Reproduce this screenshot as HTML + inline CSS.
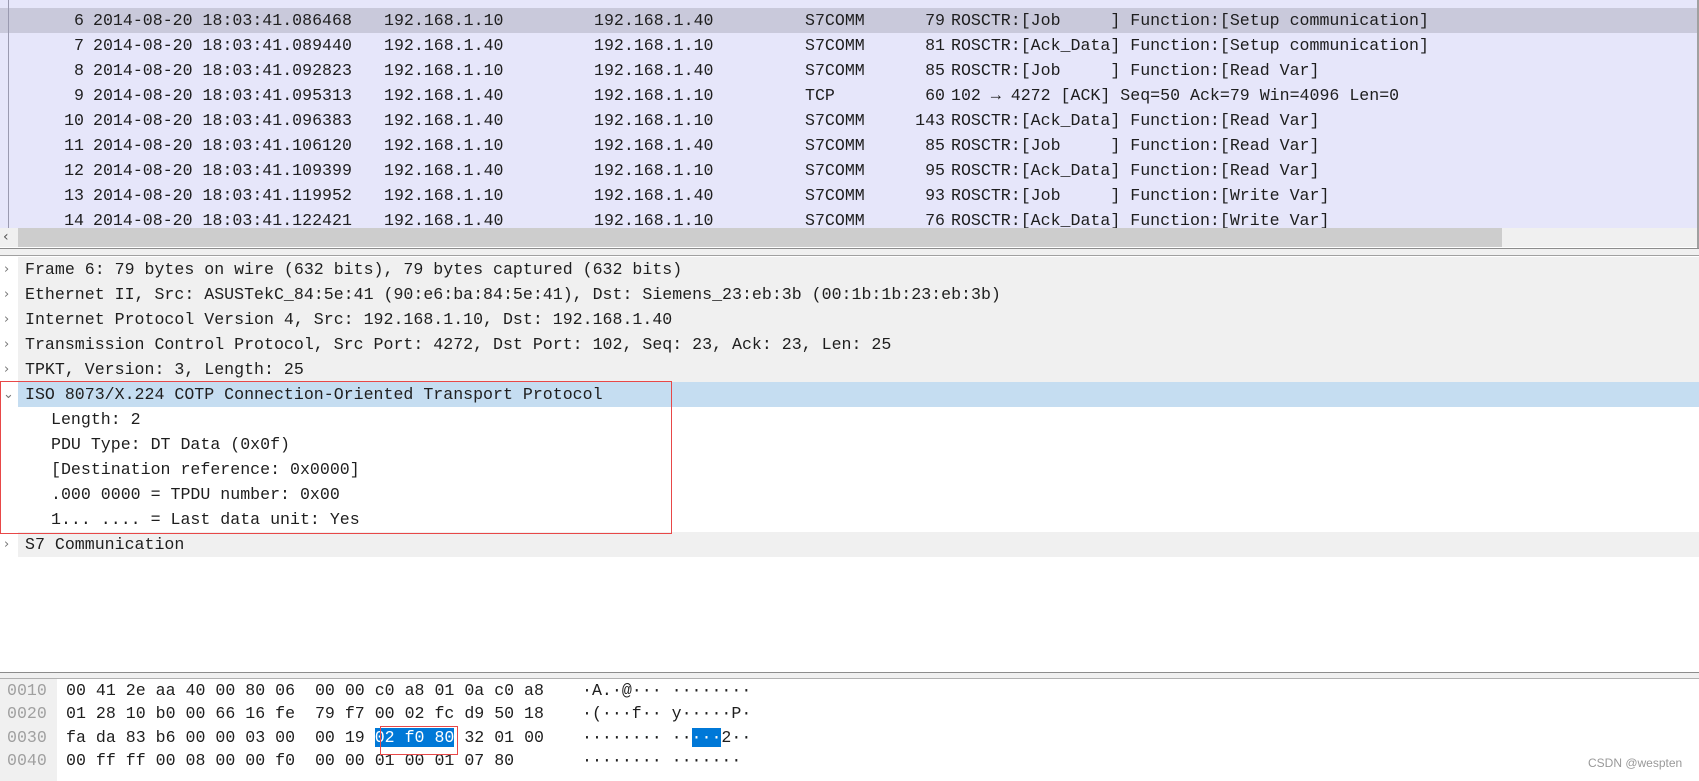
<!DOCTYPE html>
<html><head><meta charset="utf-8"><style>
*{margin:0;padding:0;box-sizing:border-box}
body{width:1699px;height:781px;overflow:hidden;background:#fff;position:relative;font-family:"Liberation Mono",monospace;font-size:16.6px;color:#1e1e1e}
.a{position:absolute;white-space:pre;line-height:25px}
#list{position:absolute;left:0;top:0;width:1697px;height:228px;background:#e6e6fa;overflow:hidden}
.row{position:absolute;left:0;width:1697px;height:25px}
.sel{background:#c9c9db}
.vl{position:absolute;left:8px;top:0;width:1px;height:228px;background:#9a9ab0}
.dr{position:absolute;left:18px;width:1681px;height:25px;background:#f0f0f0}
.arr{position:absolute;left:4px;font-family:"DejaVu Sans",sans-serif;font-size:13px;color:#777;line-height:25px}
.off{color:#a0a0a0}
.hs{background:#0078d7;color:#fff}
</style></head><body>
<div id="list">
<div class="row" style="top:-17px"></div>
<div class="row sel" style="top:8px"></div>
<div class="vl"></div>
<div class="a" style="left:0;top:-17px"><span style="display:inline-block;width:84px;text-align:right">5</span> 2014-08-20 18:03:41.083468</div>
<div class="a" style="left:384px;top:-17px">192.168.1.40</div><div class="a" style="left:594px;top:-17px">192.168.1.10</div><div class="a" style="left:805px;top:-17px">COTP</div><div class="a" style="left:905px;top:-17px">   73 CC TPDU src-ref: 0x0044 dst-ref: 0x0001</div>
</div>
<div id="rows"></div>
<!-- scrollbar -->
<div style="position:absolute;left:0;top:228px;width:1697px;height:19px;background:#f0f0f0"></div>
<div style="position:absolute;left:18px;top:228px;width:1484px;height:19px;background:#cdcdcd"></div>
<div class="a" style="left:3px;top:225px;font-family:'DejaVu Sans',sans-serif;font-size:14px;color:#555">‹</div>
<div style="position:absolute;left:1697px;top:0;width:2px;height:248px;background:#a0a0a0"></div>
<div style="position:absolute;left:0;top:248px;width:1699px;height:1px;background:#8c8c8c"></div>
<div style="position:absolute;left:0;top:249px;width:1699px;height:7px;background:#f0f0f0"></div>
<div style="position:absolute;left:0;top:255px;width:1699px;height:1px;background:#a0a0a0"></div>
<!-- details -->
<div class="dr" style="top:257px"></div><div class="dr" style="top:282px"></div><div class="dr" style="top:307px"></div><div class="dr" style="top:332px"></div><div class="dr" style="top:357px"></div>
<div class="dr" style="top:382px;background:#c5ddf1"></div>
<div class="dr" style="top:532px"></div>
<div class="arr" style="top:257px">›</div><div class="arr" style="top:282px">›</div><div class="arr" style="top:307px">›</div><div class="arr" style="top:332px">›</div><div class="arr" style="top:357px">›</div><div class="arr" style="top:382px;left:3px">⌄</div><div class="arr" style="top:532px">›</div>
<div class="a" style="left:25px;top:257px">Frame 6: 79 bytes on wire (632 bits), 79 bytes captured (632 bits)</div>
<div class="a" style="left:25px;top:282px">Ethernet II, Src: ASUSTekC_84:5e:41 (90:e6:ba:84:5e:41), Dst: Siemens_23:eb:3b (00:1b:1b:23:eb:3b)</div>
<div class="a" style="left:25px;top:307px">Internet Protocol Version 4, Src: 192.168.1.10, Dst: 192.168.1.40</div>
<div class="a" style="left:25px;top:332px">Transmission Control Protocol, Src Port: 4272, Dst Port: 102, Seq: 23, Ack: 23, Len: 25</div>
<div class="a" style="left:25px;top:357px">TPKT, Version: 3, Length: 25</div>
<div class="a" style="left:25px;top:382px">ISO 8073/X.224 COTP Connection-Oriented Transport Protocol</div>
<div class="a" style="left:51px;top:407px">Length: 2</div>
<div class="a" style="left:51px;top:432px">PDU Type: DT Data (0x0f)</div>
<div class="a" style="left:51px;top:457px">[Destination reference: 0x0000]</div>
<div class="a" style="left:51px;top:482px">.000 0000 = TPDU number: 0x00</div>
<div class="a" style="left:51px;top:507px">1... .... = Last data unit: Yes</div>
<div class="a" style="left:25px;top:532px">S7 Communication</div>
<div style="position:absolute;left:0;top:381px;width:672px;height:153px;border:1.5px solid #e84848"></div>
<!-- hex -->
<div style="position:absolute;left:0;top:672px;width:1699px;height:1px;background:#8c8c8c"></div>
<div style="position:absolute;left:0;top:673px;width:1699px;height:5px;background:#f0f0f0"></div>
<div style="position:absolute;left:0;top:678px;width:1699px;height:1px;background:#b0b0b0"></div>
<div style="position:absolute;left:0;top:679px;width:57px;height:102px;background:#f0f0f0"></div>
<div class="a off" style="left:7px;top:679px;line-height:23.3px">0010
0020
0030
0040</div>
<div class="a" style="left:66px;top:679px;line-height:23.3px">00 41 2e aa 40 00 80 06  00 00 c0 a8 01 0a c0 a8
01 28 10 b0 00 66 16 fe  79 f7 00 02 fc d9 50 18
fa da 83 b6 00 00 03 00  00 19 <span class="hs">02 f0 80</span> 32 01 00
00 ff ff 00 08 00 00 f0  00 00 01 00 01 07 80</div>
<div class="a" style="left:582px;top:679px;line-height:23.3px">·A.·@··· ········
·(···f·· y·····P·
········ ··<span class="hs">···</span>2··
········ ·······</div>
<div style="position:absolute;left:380px;top:726px;width:78px;height:29px;border:1.5px solid #e84848"></div>
<div class="a" style="left:1588px;top:753px;font-family:'Liberation Sans',sans-serif;font-size:12px;color:#999;line-height:20px">CSDN @wespten</div>
<script>
var d=[[6,"2014-08-20 18:03:41.086468","192.168.1.10","192.168.1.40","S7COMM",79,"ROSCTR:[Job     ] Function:[Setup communication]"],
[7,"2014-08-20 18:03:41.089440","192.168.1.40","192.168.1.10","S7COMM",81,"ROSCTR:[Ack_Data] Function:[Setup communication]"],
[8,"2014-08-20 18:03:41.092823","192.168.1.10","192.168.1.40","S7COMM",85,"ROSCTR:[Job     ] Function:[Read Var]"],
[9,"2014-08-20 18:03:41.095313","192.168.1.40","192.168.1.10","TCP",60,"102 → 4272 [ACK] Seq=50 Ack=79 Win=4096 Len=0"],
[10,"2014-08-20 18:03:41.096383","192.168.1.40","192.168.1.10","S7COMM",143,"ROSCTR:[Ack_Data] Function:[Read Var]"],
[11,"2014-08-20 18:03:41.106120","192.168.1.10","192.168.1.40","S7COMM",85,"ROSCTR:[Job     ] Function:[Read Var]"],
[12,"2014-08-20 18:03:41.109399","192.168.1.40","192.168.1.10","S7COMM",95,"ROSCTR:[Ack_Data] Function:[Read Var]"],
[13,"2014-08-20 18:03:41.119952","192.168.1.10","192.168.1.40","S7COMM",93,"ROSCTR:[Job     ] Function:[Write Var]"],
[14,"2014-08-20 18:03:41.122421","192.168.1.40","192.168.1.10","S7COMM",76,"ROSCTR:[Ack_Data] Function:[Write Var]"]];
var L=document.getElementById('list'),h='';
d.forEach(function(r,i){var t=8+i*25;
h+='<div class="a" style="left:0;top:'+t+'px"><span style="display:inline-block;width:84px;text-align:right">'+r[0]+'</span></div>';
h+='<div class="a" style="left:93px;top:'+t+'px">'+r[1]+'</div>';
h+='<div class="a" style="left:384px;top:'+t+'px">'+r[2]+'</div>';
h+='<div class="a" style="left:594px;top:'+t+'px">'+r[3]+'</div>';
h+='<div class="a" style="left:805px;top:'+t+'px">'+r[4]+'</div>';
h+='<div class="a" style="left:845px;top:'+t+'px;width:100px;text-align:right">'+r[5]+'</div>';
h+='<div class="a" style="left:951px;top:'+t+'px">'+r[6]+'</div>';});
L.insertAdjacentHTML('beforeend',h);
</script>
</body></html>
